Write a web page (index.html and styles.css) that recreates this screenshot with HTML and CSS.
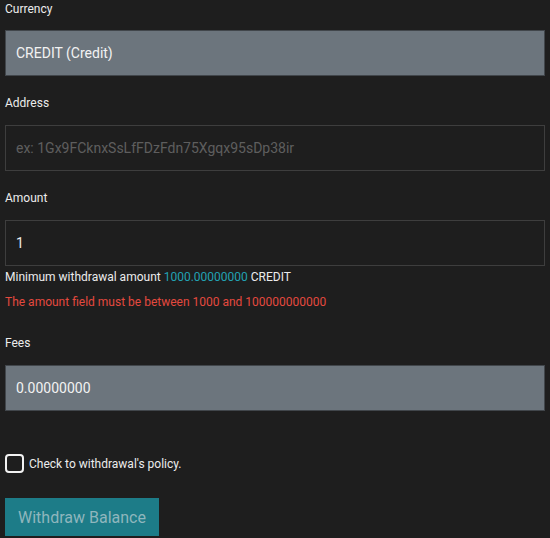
FILE: index.html
```html
<!DOCTYPE html>
<html lang="en">
<head>
  <meta charset="UTF-8">
  <meta name="viewport" content="width=device-width, initial-scale=1.0">
  <title>Withdraw</title>
  <link rel="stylesheet" href="styles.css">
</head>
<body>
  <form class="withdraw-form">
    <div class="form-group">
      <label class="form-label">Currency</label>
      <input class="form-control filled" type="text" value="CREDIT (Credit)" readonly>
    </div>

    <div class="form-group">
      <label class="form-label">Address</label>
      <input class="form-control" type="text" placeholder="ex: 1Gx9FCknxSsLfFDzFdn75Xgqx95sDp38ir">
    </div>

    <div class="form-group">
      <label class="form-label">Amount</label>
      <input class="form-control" type="text" value="1">
      <p class="hint">Minimum withdrawal amount <span class="accent">1000.00000000</span> CREDIT</p>
      <p class="error">The amount field must be between 1000 and 100000000000</p>
    </div>

    <div class="form-group">
      <label class="form-label">Fees</label>
      <input class="form-control filled" type="text" value="0.00000000" readonly>
    </div>

    <label class="check">
      <span class="check-box"></span>
      Check to withdrawal's policy.
    </label>

    <button class="btn" type="button" disabled>Withdraw Balance</button>
  </form>
</body>
</html>
```

FILE: styles.css
```css
* {
  margin: 0;
  padding: 0;
  box-sizing: border-box;
}
body {
  font-family: Roboto, "Liberation Sans", sans-serif;
  background-color: #1e1e1e;
  color: #ececec;
  padding: 0 5px;
}
.withdraw-form {
  display: flex;
  flex-direction: column;
}
.form-group {
  margin-bottom: 18px;
}
.form-label {
  display: block;
  font-size: 12px;
  line-height: 18px;
  margin-bottom: 12px;
}
.form-group + .form-group .form-label {
  margin-bottom: 13px;
}
.form-control {
  display: block;
  width: 100%;
  height: 46px;
  padding: 0 10px;
  font-family: inherit;
  font-size: 14px;
  color: #ececec;
  background-color: #1e1e1e;
  border: 1px solid #3e3e3e;
  border-radius: 0;
  outline: none;
}
.form-control::placeholder {
  color: #5e5e5e;
}
.form-control.filled {
  background-color: #6c757d;
  border-color: #41464b;
  color: #f2f2f2;
}
.hint {
  font-size: 12px;
  line-height: 18px;
  margin-top: 2px;
}
.accent {
  color: #22a2b3;
}
.error {
  font-size: 12px;
  line-height: 18px;
  margin-top: 7px;
  margin-bottom: 5px;
  color: #e4493e;
}
.check {
  display: flex;
  align-items: center;
  gap: 5px;
  font-size: 12px;
  margin-top: 25px;
}
.check-box {
  width: 19px;
  height: 19px;
  border: 2px solid #f2f2f2;
  border-radius: 4px;
}
.btn {
  align-self: flex-start;
  margin-top: 25px;
  height: 38px;
  padding: 0 13px;
  font-family: inherit;
  font-size: 16px;
  color: #8fb6bd;
  background-color: #1d7c88;
  border: none;
  border-radius: 0;
}
```
